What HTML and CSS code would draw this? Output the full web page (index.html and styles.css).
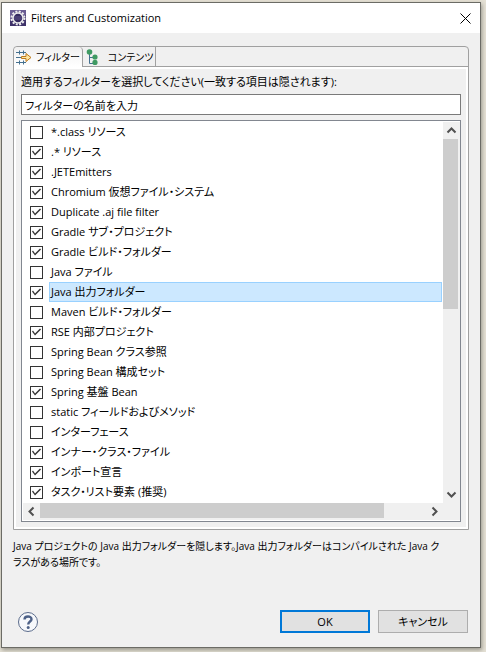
FILE: index.html
```html
<!DOCTYPE html>
<html lang="ja">
<head>
	<meta charset="utf-8">
	<title>Filters and Customization</title>
	<link rel="stylesheet" href="styles.css">
</head>
<body>
	<div class="dialog">
		<header class="titlebar">
			<svg class="app-icon" viewBox="0 0 16 16" aria-hidden="true">
				<rect width="16" height="16" fill="#3d3169"/>
				<path d="M0 0h16v5L0 11z" fill="#6a5d92"/>
				<circle cx="8" cy="8" r="6.500" fill="none" stroke="#eee" stroke-width="2" stroke-dasharray="2 1.400"/>
				<circle cx="8" cy="8" r="5" fill="#352a60" stroke="#eee" stroke-width="1.500"/>
				<path d="M4 7h8M4 9h8" stroke="#6d6296" stroke-width=".8"/>
			</svg>
			<h1>Filters and Customization</h1>
			<button class="close" aria-label="閉じる">
				<svg viewBox="0 0 11 11"><path d="M.5.5l10 10M10.5.5l-10 10" stroke="#000" fill="none"/></svg>
			</button>
		</header>

		<main class="content">
			<div class="tab-folder">
				<div class="tabs" role="tablist">
					<button class="tab selected" role="tab" aria-selected="true">
						<svg class="tab-icon" viewBox="0 0 16 16">
							<path d="M0 3.500h10M0 13.500h10M0 8.500h5" stroke="#44708f" fill="none"/>
							<path d="M3.500 1.500v4M7.500 1.500v4M3.500 11.500v4M7.500 11.500v4" stroke="#44708f" fill="none"/>
							<path d="M5.500 7.500H10V4.500L15 8.500 10 12.500V9.500H5.500z" fill="#ffe6a0" stroke="#bd7a1c"/>
						</svg>
						フィルター
					</button>
					<button class="tab" role="tab" aria-selected="false">
						<svg class="tab-icon" viewBox="0 0 16 16">
							<path d="M4.500 4v10.500H9M4.500 8.500H9" stroke="#44708f" fill="none"/>
							<circle cx="4.500" cy="3" r="2.800" fill="#3f9a62"/>
							<circle cx="10" cy="8" r="2.600" fill="#3f9a62"/>
							<circle cx="10" cy="13.400" r="2.600" fill="#3f9a62"/>
						</svg>
						コンテンツ
					</button>
				</div>

				<div class="panel">
					<label class="prompt" for="pattern">適用するフィルターを選択してください(一致する項目は隠されます):</label>
					<input class="pattern" id="pattern" type="text" value="フィルターの名前を入力">

					<div class="list">
						<div class="rows">
							<label class="row"><input type="checkbox"><span>*.class リソース</span></label>
							<label class="row"><input type="checkbox" checked><span>.* リソース</span></label>
							<label class="row"><input type="checkbox" checked><span>.JETEmitters</span></label>
							<label class="row"><input type="checkbox" checked><span>Chromium 仮想ファイル・システム</span></label>
							<label class="row"><input type="checkbox" checked><span>Duplicate .aj file filter</span></label>
							<label class="row"><input type="checkbox" checked><span>Gradle サブ・プロジェクト</span></label>
							<label class="row"><input type="checkbox" checked><span>Gradle ビルド・フォルダー</span></label>
							<label class="row"><input type="checkbox"><span>Java ファイル</span></label>
							<label class="row current"><input type="checkbox" checked><span>Java 出力フォルダー</span></label>
							<label class="row"><input type="checkbox"><span>Maven ビルド・フォルダー</span></label>
							<label class="row"><input type="checkbox" checked><span>RSE 内部プロジェクト</span></label>
							<label class="row"><input type="checkbox"><span>Spring Bean クラス参照</span></label>
							<label class="row"><input type="checkbox"><span>Spring Bean 構成セット</span></label>
							<label class="row"><input type="checkbox" checked><span>Spring 基盤 Bean</span></label>
							<label class="row"><input type="checkbox"><span>static フィールドおよびメソッド</span></label>
							<label class="row"><input type="checkbox"><span>インターフェース</span></label>
							<label class="row"><input type="checkbox" checked><span>インナー・クラス・ファイル</span></label>
							<label class="row"><input type="checkbox" checked><span>インポート宣言</span></label>
							<label class="row"><input type="checkbox" checked><span>タスク・リスト要素 (推奨)</span></label>
						</div>
						<div class="scroll vertical">
							<svg class="arrow" viewBox="0 0 17 17"><path d="M4.500 10.500l4-4 4 4" /></svg>
							<div class="track"><div class="thumb"></div></div>
							<svg class="arrow" viewBox="0 0 17 17"><path d="M4.500 6.500l4 4 4-4" /></svg>
						</div>
						<div class="scroll horizontal">
							<svg class="arrow" viewBox="0 0 17 17"><path d="M10.500 4.500l-4 4 4 4" /></svg>
							<div class="track"><div class="thumb"></div></div>
							<svg class="arrow" viewBox="0 0 17 17"><path d="M6.500 4.500l4 4-4 4" /></svg>
						</div>
						<div class="corner"></div>
					</div>
				</div>
			</div>

			<p class="description">Java プロジェクトの Java 出力フォルダーを隠します。Java 出力フォルダーはコンパイルされた Java ク<br>ラスがある場所です。</p>

			<footer class="footer">
				<button class="help" aria-label="ヘルプ">
					<svg viewBox="0 0 22 22">
						<circle cx="11" cy="11" r="9.500" fill="#f6f8fb" stroke="#5b6c8c"/>
						<path d="M7.500 8.500C7.500 4.500 14.500 4.500 14.500 8.200C14.500 10.500 11.200 10.500 11.200 13.500" fill="none" stroke="#4d6187" stroke-width="2.400"/>
						<circle cx="11.200" cy="16.500" r="1.500" fill="#4d6187"/>
					</svg>
				</button>
				<button class="button default">OK</button>
				<button class="button">キャンセル</button>
			</footer>
		</main>
	</div>
</body>
</html>
```
FILE: styles.css
```css
* {
	box-sizing: border-box;
}

body {
	display: flex;
	min-height: 100vh;
	margin: 0;
	padding: 2px 5px 4px 1px;
	background: #e4e0d4;
	color: #000;
	font: 11px/16px "Open Sans", "Noto Sans CJK JP", sans-serif;
	font-feature-settings: "palt";
}

button,
input {
	margin: 0;
	font: inherit;
	font-feature-settings: inherit;
	color: inherit;
}

svg {
	display: block;
}

.dialog {
	flex: 1;
	min-width: 0;
	display: flex;
	flex-direction: column;
	border: 1px solid #6b6b65;
	background: #f0f0f0;
	box-shadow: 1px 2px 4px #98958c;
}

/* title bar */
.titlebar {
	display: flex;
	align-items: center;
	gap: 5px;
	height: 30px;
	padding: 0 7px 0 8px;
	background: #fff;
}

.titlebar h1 {
	flex: 1;
	margin: 0;
	font-size: 11px;
	font-weight: normal;
}

.app-icon {
	width: 16px;
	height: 16px;
}

.close {
	padding: 2px;
	border: 0;
	background: none;
}

.close svg {
	width: 11px;
	height: 11px;
}

.content {
	flex: 1;
	display: flex;
	flex-direction: column;
	padding: 13px 11px 14px;
}

/* tabs */
.tab-folder {
	border: 1px solid #a0a0a0;
	border-radius: 4px 4px 0 0;
}

.tabs {
	display: flex;
	height: 20px;
	border-bottom: 1px solid #a0a0a0;
}

.tab {
	display: flex;
	align-items: center;
	gap: 4px;
	height: 19px;
	padding: 0 2px;
	border: 0;
	border-right: 1px solid #a0a0a0;
	background: none;
	font-size: 10px;
	white-space: nowrap;
}

.tab + .tab {
	gap: 7px;
}

.tab.selected {
	height: 20px;
	border-radius: 4px 4px 0 0;
	background: linear-gradient(#f0f0f0, #fff);
}

.tab-icon {
	width: 16px;
	height: 16px;
}

.panel {
	display: flex;
	flex-direction: column;
	padding: 5px;
	border: 2px solid #fff;
}

.prompt {
	margin-bottom: 4px;
}

.pattern {
	height: 21px;
	margin-bottom: 5px;
	padding: 0 3px;
	border: 1px solid #7a7a7a;
	background: #fff;
}

/* filter list */
.list {
	display: grid;
	grid-template-columns: 1fr 17px;
	grid-template-rows: auto 17px;
	padding: 1px 0 1px 1px;
	border: 1px solid #828790;
	background: #fff;
}

.rows {
	padding-bottom: 1px;
}

.row {
	display: flex;
	align-items: center;
	gap: 6px;
	height: 20px;
	padding: 0 1px 0 7px;
}

.row span {
	flex: 1;
	padding: 1px;
	border: 1px solid transparent;
	white-space: nowrap;
}

.row.current span {
	border-color: #99d1ff;
	background: #cce8ff;
}

.row input {
	appearance: none;
	width: 13px;
	height: 13px;
	border: 1px solid #333;
	background: #fff;
}

.row input:checked::before {
	content: "";
	display: block;
	width: 11px;
	height: 11px;
	background: #333;
	clip-path: polygon(1px 5px, 2px 4px, 4px 7px, 9px 2px, 10px 3px, 4px 9px);
}

.scroll {
	display: flex;
	background: #f0f0f0;
}

.vertical {
	flex-direction: column;
}

.arrow {
	flex: none;
	width: 17px;
	height: 17px;
	fill: none;
	stroke: #505050;
	stroke-width: 2;
}

.track {
	flex: 1;
}

.thumb {
	background: #cdcdcd;
}

.vertical .thumb {
	width: 15px;
	height: 49%;
}

.horizontal .thumb {
	width: 89%;
	height: 15px;
}

.corner {
	background: #f0f0f0;
}

.description {
	margin: 8px 0;
	font-size: 10px;
	white-space: nowrap;
}

/* footer */
.footer {
	display: flex;
	align-items: center;
	gap: 8px;
	margin-top: auto;
	padding-right: 1px;
}

.help {
	margin-right: auto;
	padding: 0 0 0 4px;
	border: 0;
	background: none;
}

.help svg {
	width: 22px;
	height: 22px;
}

.button {
	width: 90px;
	height: 23px;
	padding: 0;
	border: 1px solid #adadad;
	background: #e1e1e1;
}

.button.default {
	border: 2px solid #0078d7;
}
```
